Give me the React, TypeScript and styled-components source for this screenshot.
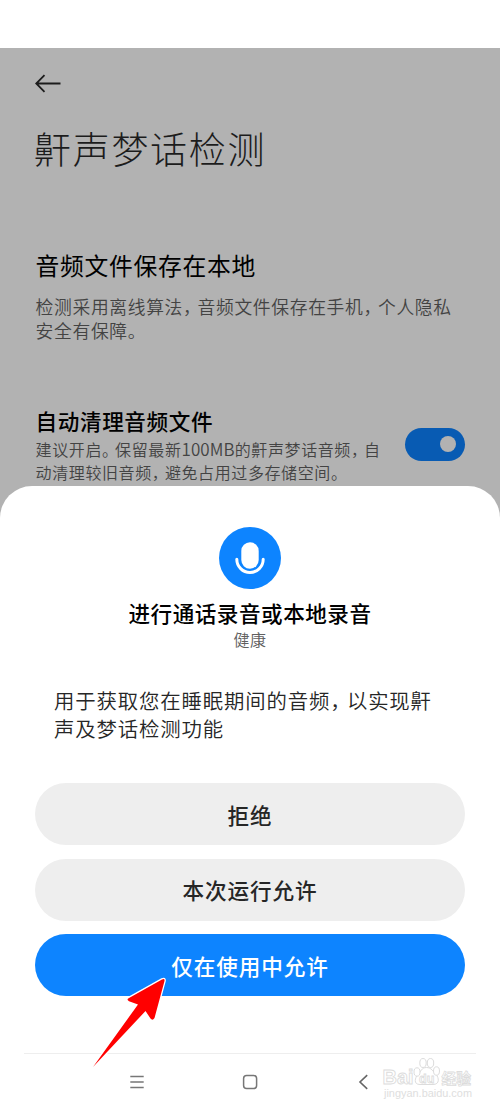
import React from "react";
import styled, { createGlobalStyle } from "styled-components";

const GlobalStyle = createGlobalStyle`
  * { box-sizing: border-box; }
  body {
    margin: 0;
    background: #fff;
    font-family: "Noto Sans CJK SC", sans-serif;
  }
`;

const Screen = styled.main`
  position: relative;
  display: flex;
  flex-direction: column;
  width: 500px;
  height: 1111px;
  padding-top: 48px;
  overflow: hidden;
  background: #fff;
`;

const SettingsPage = styled.section`
  height: 438px;
  flex: none;
  padding: 25px 35px 0;
  background: #b2b2b2;
`;

const BackButton = styled.button`
  display: block;
  height: 21px;
  padding: 0;
  border: 0;
  background: none;
`;

const TextLine = styled.span<{ $pitch: number; $size: number }>`
  display: block;
  white-space: nowrap;
  font-size: ${(p) => p.$size}px;
  letter-spacing: ${(p) => p.$pitch - p.$size}px;
`;

const PageTitle = styled.h1`
  margin: 30px 0 0 -1px;
  line-height: 48px;
  font-weight: 300;
  color: #1c1c1c;
`;

const SettingTitle = styled.h2<{ $weight: number }>`
  margin: 0;
  line-height: 32px;
  font-weight: ${(p) => p.$weight};
  color: #000;
`;

const SettingText = styled.p<{ $leading: number }>`
  margin: 0;
  line-height: ${(p) => p.$leading}px;
  font-weight: 350;
  color: #434343;
`;

const StorageSetting = styled.div`
  margin-top: 77px;
  padding-left: 0.6px;
  display: flex;
  flex-direction: column;
  gap: 13px;
`;

const CleanupSetting = styled.div`
  margin-top: 62px;
  display: flex;
  justify-content: space-between;
  align-items: flex-start;
`;

const CleanupCopy = styled.div`
  display: flex;
  flex-direction: column;
  gap: 1.5px;
  width: 350px;
  padding-left: 0.6px;
`;

const Mark = styled.span`
  font-feature-settings: "halt";
  margin-right: 0.28em;
`;

const Latin = styled.span`
  font-size: 17px;
  letter-spacing: 0.1px;
`;

const Toggle = styled.button`
  display: flex;
  align-items: center;
  justify-content: flex-end;
  width: 60px;
  height: 33px;
  margin-top: 23px;
  padding: 0 9px;
  border: 0;
  border-radius: 17px;
  background: #085bb3;
`;

const Knob = styled.span`
  width: 16px;
  height: 16px;
  border-radius: 50%;
  background: #b2b2b2;
`;

const SheetArea = styled.div`
  flex: none;
  height: 567px;
  background: linear-gradient(#b2b2b2 40px, #fff 40px);
`;

const Sheet = styled.section`
  display: flex;
  flex-direction: column;
  align-items: center;
  height: 100%;
  padding: 41px 35px 0;
  border-radius: 32px 32px 0 0;
  background: #fff;
`;

const SheetTitle = styled.h2`
  margin: 8px 0 0;
  line-height: 32px;
  font-weight: 500;
  color: #000;
`;

const AppName = styled.p`
  margin: -1px 0 0;
  line-height: 22px;
  font-weight: 350;
  color: #606060;
`;

const Reason = styled.p`
  align-self: stretch;
  margin: 36px 0 0;
  padding-left: 19px;
  line-height: 28.2px;
  font-weight: 350;
  color: #262626;
`;

const Actions = styled.div`
  display: flex;
  flex-direction: column;
  gap: 13.5px;
  width: 430px;
  margin-top: 40.8px;
`;

const ActionButton = styled.button<{ $primary?: boolean }>`
  display: flex;
  align-items: center;
  justify-content: center;
  height: 62px;
  padding: 0;
  border: 0;
  border-radius: 31px;
  font-family: inherit;
  font-weight: 500;
  color: ${(p) => (p.$primary ? "#fff" : "#262626")};
  background: ${(p) => (p.$primary ? "#0d84ff" : "#eee")};
`;

const NavBar = styled.nav`
  display: flex;
  justify-content: space-between;
  align-items: center;
  height: 58px;
  margin: 0 24px;
  padding: 0 105px 2px;
  border-top: 1px solid #eee;
`;

const Pointer = styled.svg`
  position: absolute;
  left: 88px;
  top: 970px;
`;

const Watermark = styled.div`
  position: absolute;
  left: 382px;
  top: 1056px;
  width: 92px;
  height: 46px;
`;

const App = () => (
  <>
    <GlobalStyle />
    <Screen>
      <SettingsPage>
        <BackButton aria-label="返回">
          <svg width="27" height="21" viewBox="0 0 27 21" fill="none" stroke="#1c1c1c" strokeWidth="1.8">
            <path d="M25.5 10.5H1.5M9.5 2.2L1.2 10.5L9.5 18.8" />
          </svg>
        </BackButton>
        <PageTitle>
          <TextLine $pitch={38.7} $size={37}>鼾声梦话检测</TextLine>
        </PageTitle>
        <StorageSetting>
          <SettingTitle $weight={400}>
            <TextLine $pitch={24.5} $size={23.8}>音频文件保存在本地</TextLine>
          </SettingTitle>
          <SettingText $leading={24.4}>
            <TextLine $pitch={18.45} $size={17.8}>
              检测采用离线算法<Mark>，</Mark>音频文件保存在手机<Mark>，</Mark>个人隐私
            </TextLine>
            <TextLine $pitch={18.45} $size={17.8}>安全有保障。</TextLine>
          </SettingText>
        </StorageSetting>
        <CleanupSetting>
          <CleanupCopy>
            <SettingTitle $weight={500}>
              <TextLine $pitch={22.2} $size={21.6}>自动清理音频文件</TextLine>
            </SettingTitle>
            <SettingText $leading={22.4}>
              <TextLine $pitch={16.6} $size={16}>
                建议开启<Mark>。</Mark>保留最新<Latin>100MB</Latin>的鼾声梦话音频<Mark>，</Mark>自
              </TextLine>
              <TextLine $pitch={16.6} $size={16}>
                动清理较旧音频<Mark>，</Mark>避免占用过多存储空间。
              </TextLine>
            </SettingText>
          </CleanupCopy>
          <Toggle role="switch" aria-checked="true" aria-label="自动清理音频文件">
            <Knob />
          </Toggle>
        </CleanupSetting>
      </SettingsPage>

      <SheetArea>
        <Sheet>
          <svg width="62" height="62" viewBox="0 0 62 62">
            <circle cx="31" cy="31" r="31" fill="#0d84ff" />
            <rect x="22.3" y="15.3" width="17.4" height="26.4" rx="8.7" fill="#fff" />
            <path d="M17.8 32.3a13.2 13.2 0 0 0 26.4 0" fill="none" stroke="#fff" strokeWidth="3" strokeLinecap="round" />
          </svg>
          <SheetTitle>
            <TextLine $pitch={22.1} $size={21.6}>进行通话录音或本地录音</TextLine>
          </SheetTitle>
          <AppName>
            <TextLine $pitch={16.5} $size={16}>健康</TextLine>
          </AppName>
          <Reason>
            <TextLine $pitch={21.25} $size={20.4}>
              用于获取您在睡眠期间的音频<Mark>，</Mark>以实现鼾
            </TextLine>
            <TextLine $pitch={21.25} $size={20.4}>声及梦话检测功能</TextLine>
          </Reason>
          <Actions>
            <ActionButton>
              <TextLine $pitch={22.5} $size={21.6}>拒绝</TextLine>
            </ActionButton>
            <ActionButton>
              <TextLine $pitch={22.5} $size={21.6}>本次运行允许</TextLine>
            </ActionButton>
            <ActionButton $primary>
              <TextLine $pitch={22.5} $size={21.6}>仅在使用中允许</TextLine>
            </ActionButton>
          </Actions>
        </Sheet>
      </SheetArea>

      <NavBar>
        <svg width="16" height="16" viewBox="0 0 16 16" fill="none" stroke="#777" strokeWidth="1.5">
          <path d="M1.3 2.6h13.4M1.3 8h13.4M1.3 13.4h13.4" />
        </svg>
        <svg width="16" height="16" viewBox="0 0 16 16" fill="none" stroke="#777" strokeWidth="1.5">
          <rect x="1.6" y="1.6" width="13" height="13" rx="3" />
        </svg>
        <svg width="16" height="16" viewBox="0 0 16 16" fill="none" stroke="#666" strokeWidth="1.6">
          <path d="M12.2 1.2L5 8l7.2 6.8" />
        </svg>
      </NavBar>

      <Pointer width="84" height="102" viewBox="0 0 84 102">
        <path
          d="M5 97L50 34.5L41 31.2Q38 29.5 41 28L74 9.5Q77 8 76.5 11L66.500 48Q64.500 51 62.500 48.500L57.500 41Z"
          fill="#f00"
          stroke="#fff"
          strokeWidth="2.6"
          strokeLinejoin="round"
          paintOrder="stroke"
        />
      </Pointer>

      <Watermark>
        <svg width="92" height="46" viewBox="0 0 92 46" fill="#fff" stroke="#dcdcdc">
          <text x="0.5" y="28" fontFamily="Liberation Sans" fontSize="20" fontWeight="700" textLength="31" lengthAdjust="spacingAndGlyphs" strokeWidth="0.9">Bai</text>
          <path d="M44.5 11.5c-5 0-5.5 4-8.500 7s-5 10 2 10h13c7 0 6-7 3-10s-4.500-7-9.500-7Z" />
          <ellipse cx="35" cy="16" rx="3" ry="4.2" />
          <ellipse cx="41" cy="7" rx="3.2" ry="4.5" />
          <ellipse cx="48.5" cy="7" rx="3.2" ry="4.5" />
          <ellipse cx="54.5" cy="15" rx="3" ry="4.2" />
          <text x="37" y="27" fontFamily="Liberation Sans" fontSize="12.5" fontWeight="700" strokeWidth="0.8">du</text>
          <text x="59.5" y="27.5" fontFamily="Noto Sans CJK SC" fontSize="14.8" fontWeight="700" strokeWidth="0.8">经验</text>
          <text x="2" y="41" fontFamily="Liberation Sans" fontSize="10" textLength="88" lengthAdjust="spacingAndGlyphs" fill="#dedede" stroke="none">jingyan.baidu.com</text>
        </svg>
      </Watermark>
    </Screen>
  </>
);

export default App;
